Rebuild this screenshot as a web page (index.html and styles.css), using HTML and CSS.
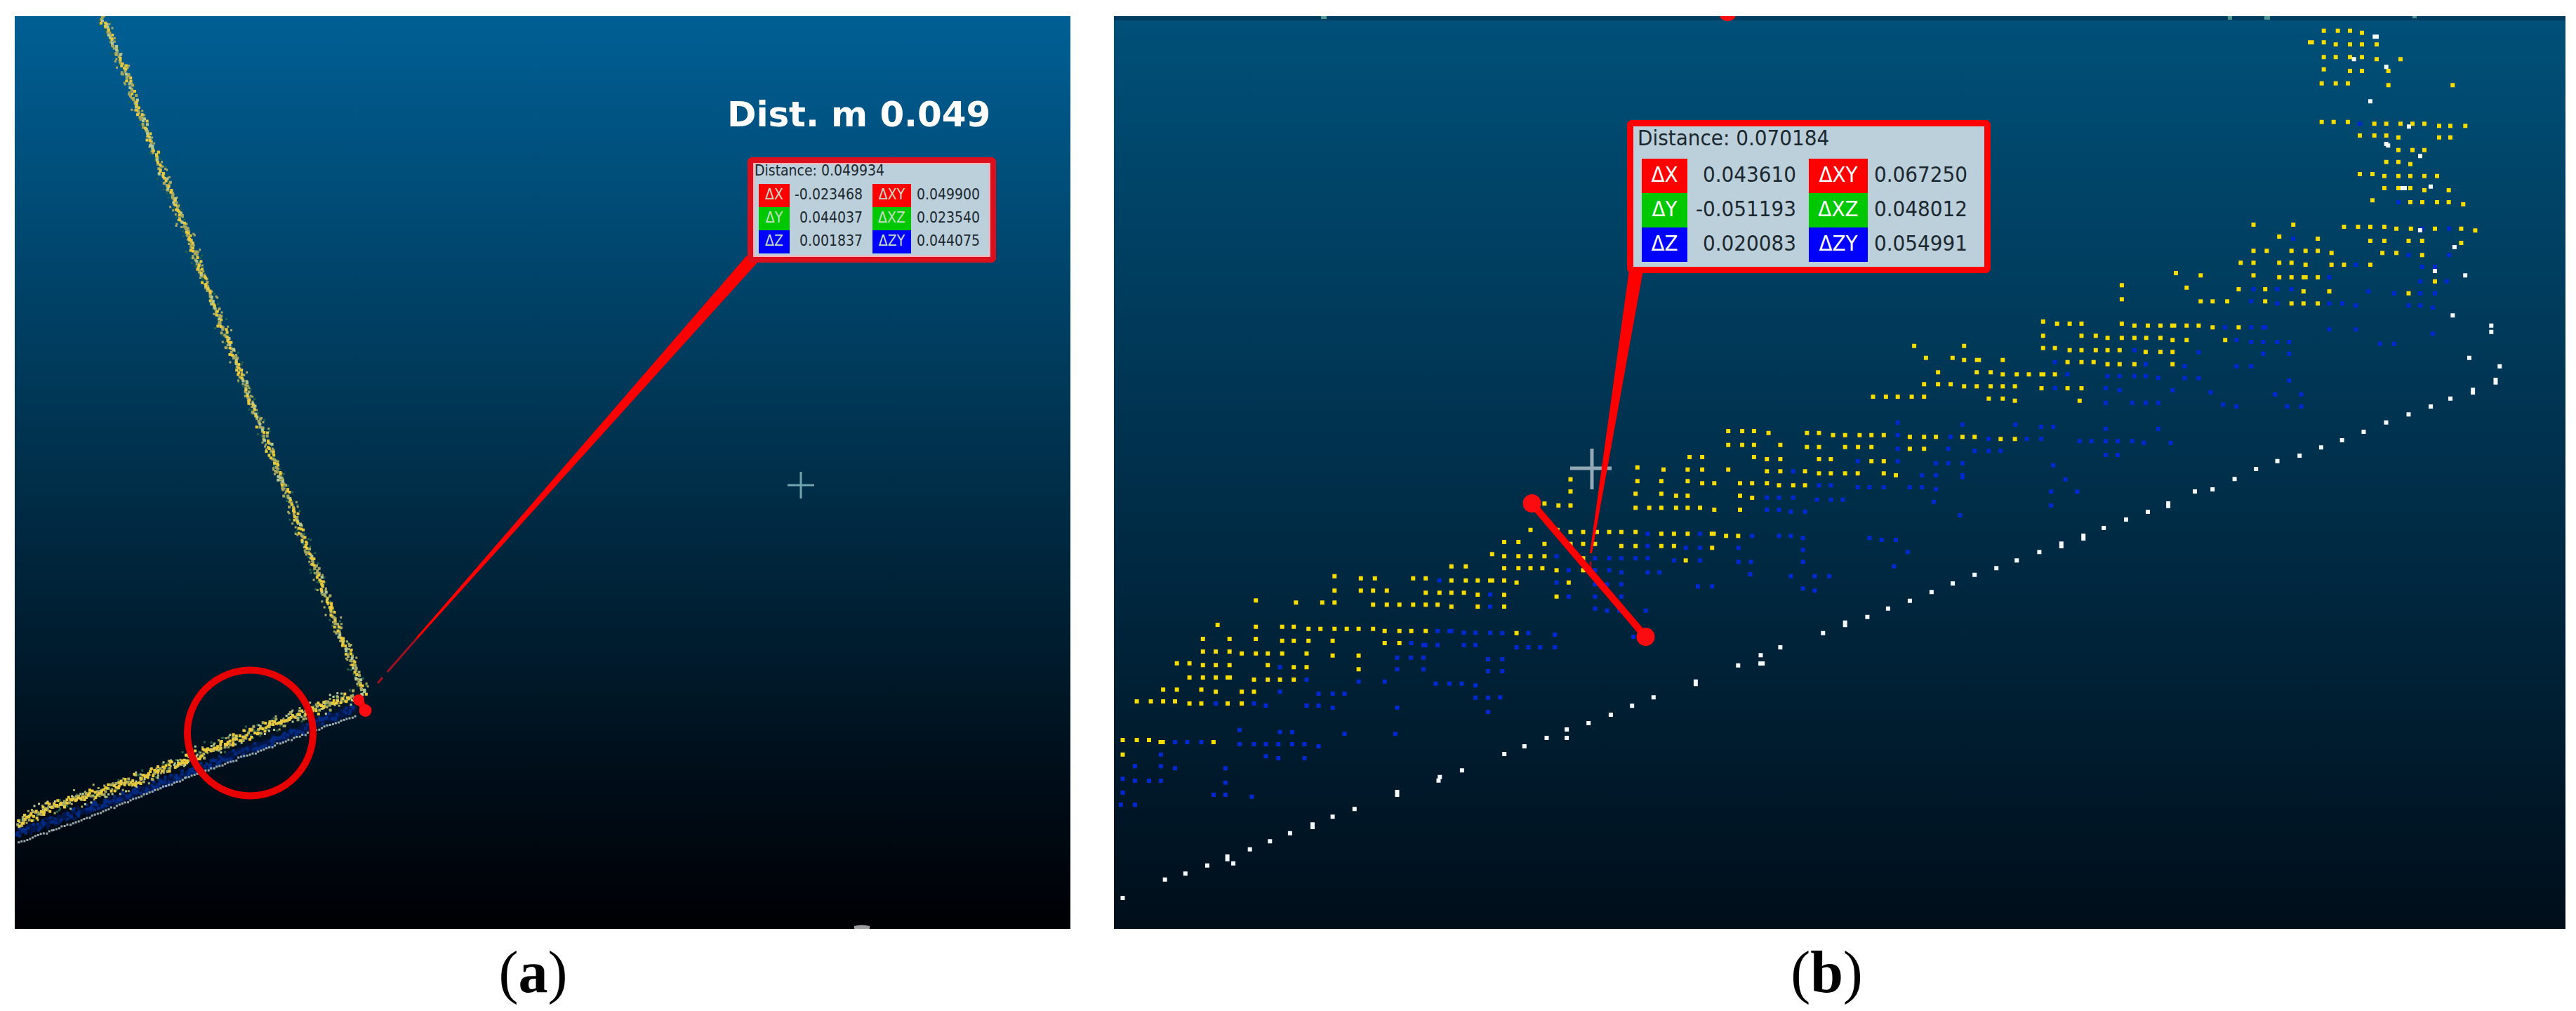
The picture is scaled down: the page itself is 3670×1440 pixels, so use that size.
FILE: index.html
```html
<!DOCTYPE html>
<html lang="en">
<head>
    <meta charset="UTF-8">
    <title>Point cloud distances</title>
    <link rel="stylesheet" href="styles.css">
</head>
<body>
    <div class="figures">
        <figure class="figure figure-a">
            <div class="view view-a">
                <svg class="scene" viewBox="21 23 1504 1300">
                    <g id="cloudA"></g>
                    <circle class="marker" cx="356.5" cy="1044" r="89.5"/>
                    <path class="dist-line" d="M511 996L520.5 1012"/>
                    <circle class="dist-end" cx="511" cy="997" r="8"/>
                    <circle class="dist-end" cx="520.5" cy="1012" r="9"/>
                    <path class="pointer" d="M1064 364L1079 374L594 911L592 909Z"/>
                    <path class="pointer-tip" d="M594 909L552 957M545 965L538 973"/>
                    <path class="cross cross-a" d="M1141 672V710M1122 691H1160"/>
                    <path class="scale-end" d="M1217 1323V1319Q1228 1316 1239 1319V1323Z"/>
                </svg>
                <div class="dist-title">Dist. m 0.049</div>
                <div class="callout callout-a">
                    <div class="callout-title">Distance: 0.049934</div>
                    <div class="callout-grid">
                        <span class="chip red">ΔX</span><span class="num">-0.023468</span><span class="chip red">ΔXY</span><span class="val">0.049900</span>
                        <span class="chip green">ΔY</span><span class="num">0.044037</span><span class="chip green">ΔXZ</span><span class="val">0.023540</span>
                        <span class="chip blue">ΔZ</span><span class="num">0.001837</span><span class="chip blue">ΔZY</span><span class="val">0.044075</span>
                    </div>
                </div>
            </div>
            <figcaption>(<b>a</b>)</figcaption>
        </figure>
        <figure class="figure figure-b">
            <div class="view view-b">
                <svg class="scene" viewBox="1587 23 2068 1300">
                    <rect class="strip" x="1587" y="23" width="2068" height="6"/>
                    <path class="strip-dots" d="M1882 23h8v4h-8zM3174 23h6v5h-6zM3226 23h8v5h-8zM3437 23h6v3h-6z"/>
                    <path class="dist-end" d="M2450 23H2473Q2470 30 2461 30Q2453 30 2450 23Z"/>
                    <g id="cloudB"></g>
                    <path class="cross cross-b" d="M2268 639V697M2237 667H2296"/>
                    <path class="pointer" d="M2321 385H2341L2268 788L2265 788Z"/>
                    <path class="pointer-tip" d="M2266 800V812"/>
                    <path class="dist-line" d="M2182.5 717L2344.5 907"/>
                    <circle class="dist-end" cx="2182.5" cy="717" r="13"/>
                    <circle class="dist-end" cx="2344.5" cy="907" r="13"/>
                </svg>
                <div class="callout callout-b">
                    <div class="callout-title">Distance: 0.070184</div>
                    <div class="callout-grid">
                        <span class="chip red">ΔX</span><span class="num">0.043610</span><span class="chip red">ΔXY</span><span class="val">0.067250</span>
                        <span class="chip green">ΔY</span><span class="num">-0.051193</span><span class="chip green">ΔXZ</span><span class="val">0.048012</span>
                        <span class="chip blue">ΔZ</span><span class="num">0.020083</span><span class="chip blue">ΔZY</span><span class="val">0.054991</span>
                    </div>
                </div>
            </div>
            <figcaption>(<b>b</b>)</figcaption>
        </figure>
    </div>
    <script src="cloud.js"></script>
</body>
</html>
```
FILE: styles.css
```css
body {
    margin: 0;
    background: #fff;
    font-family: "DejaVu Sans Condensed", "DejaVu Sans", sans-serif;
}

.figures {
    display: grid;
    grid-template-columns: 1504px 2068px;
    column-gap: 62px;
    height: 1440px;
    padding: 23px 15px 0 21px;
    box-sizing: border-box;
    overflow: hidden;
}

.figure {
    margin: 0;
}

.view {
    position: relative;
    height: 1300px;
    overflow: hidden;
}

.view-a {
    background: linear-gradient(#005f94, #002f4a 50%, #000d18 84%, #000004);
}

.view-b {
    background: linear-gradient(#005079, #002e49 52%, #000e1a);
}

.scene {
    display: block;
    width: 100%;
    height: 100%;
}

figcaption {
    font: 84px/96px "Liberation Serif", serif;
    padding-top: 14px;
    padding-right: 27px;
    text-align: center;
    color: #000;
}

.figure-b figcaption {
    padding-right: 37px;
}

/* measurement graphics */
.marker {
    fill: none;
    stroke: #e60000;
    stroke-width: 10;
}

.dist-line {
    stroke: #f00;
    stroke-width: 10;
}

.dist-end {
    fill: #fa0c10;
}

.pointer {
    fill: #f00;
}

.pointer-tip {
    stroke: #a01020;
    stroke-width: 3;
}

.cross {
    fill: none;
}

.cross-a {
    stroke: #6fa5ad;
    stroke-width: 3;
}

.cross-b {
    stroke: #93a9b5;
    stroke-width: 5;
}

.scale-end {
    fill: #a0a0a4;
}

.strip {
    fill: #003c60;
}

.strip-dots {
    fill: #4f9a90;
}

/* points */
.p-yellow { fill: #f7dc00; }
.p-blue { fill: #0029d2; }
.p-white { fill: #f4fbff; }
.p-gold { fill: #e8c83c; }
.p-tan { fill: #a8a860; }
.p-pale { fill: #b4c896; }
.p-green { fill: #236048; }
.p-navy { fill: #002a80; }
.p-deep { fill: #00184e; }
.p-gray { fill: #98aaac; }

.dist-title {
    position: absolute;
    left: 1015px;
    top: 110px;
    font: bold 50px/60px "DejaVu Sans", sans-serif;
    letter-spacing: -0.1px;
    color: #fff;
    white-space: nowrap;
}

/* distance labels */
.callout {
    position: absolute;
    box-sizing: border-box;
    background: #bbd0da;
    color: #1c2830;
    white-space: nowrap;
}

.callout-a {
    left: 1044px;
    top: 201px;
    width: 354px;
    height: 150px;
    border: 8px solid #dc0f1c;
    border-radius: 6px;
    box-shadow: inset 0 0 0 2px #ffb0b8;
    font-size: 21px;
}

.callout-b {
    left: 731px;
    top: 148px;
    width: 518px;
    height: 218px;
    border: 9px solid #f00;
    border-radius: 7px;
    font-size: 31px;
}

.callout-title {
    line-height: 22px;
    padding-left: 2px;
    margin-bottom: 8px;
}

.callout-b .callout-title {
    line-height: 33px;
    padding-left: 6px;
    margin-bottom: 13px;
}

.callout-grid {
    display: grid;
    grid-template-columns: 44px 118px 55px auto;
    grid-auto-rows: 33px;
    line-height: 31px;
    padding-left: 8px;
}

.callout-b .callout-grid {
    grid-template-columns: 65px 173px 84px auto;
    grid-auto-rows: 49px;
    line-height: 45px;
    padding-left: 12px;
}

.chip {
    color: #fff;
    text-align: center;
}

.callout-a .chip {
    color: #c8dcc8;
}

.red { background: #f00; }
.green { background: #00c800; }
.blue { background: #00f; }

.num {
    text-align: right;
    padding-right: 14px;
}

.val {
    padding-left: 8px;
}

.callout-b .num {
    padding-right: 18px;
}

.callout-b .val {
    padding-left: 9px;
}
```
FILE: cloud.js
```javascript
// each tile: origin, scale, and rows of "y: x x x" for every colour
const tiles = [
    {
        ox: 1570, oy: 700, sx: 2.24, sy: 3,
        yellow: '268:1245;320:1115 1161;362:742;371:826 871 993 1033;380:1115 1161 1199 1239 1245;424:742 826 865 909;433:1033 1077 1115 1155;441:1199;466:491;475:619 703 742;484:865 909 949 993 1033 1071;492:1115 1199;570:369;578:491 575 612;587:659 697 742 781 819 865;596:902 949 987 1033;630:322 407 491;638:575 612 659 736;648:902 949;684:322 363 407;692:446 491 529 575 653;701:736 819;734:239 279;742:322 363 407 529;751:612 653;760:819;795:279 322 363 401 408;804:485 529 568 612;847:195 239 317;856:363 446 485;897:111 156 195 233;906:279 317 401 446;1062:66 111 150;1071:187 194 356;1124:66',
        blue: '380:1077;440:1239;492:1239;596:1071 1109 1115;604:1155 1192 1239;648:987;656:1026 1032 1071 1155 1192;710:942 986 1026;717:1232;751:568;760:942 1026;768:1232;804:653;812:819 902;821:1065 1109 1148;829:1192;856:568;864:691 736 774;881:1192 1232;906:363 485;915:523 653 691;924:736 942;942:1232;1019:439;1028:568 607;1036:774 936;1071:233 272 317;1080:439 485 523 563 607 646;1089:691;1124:188;1132:523;1140:563 646;1174:105 188;1183:233 394;1228:66;1236:105 150 188;1244:394;1287:66;1296:356 394;1304:478;1339:60 105',
        white: '1017:1483;1053:1419 1483;1089:1348;1122:1284;1192:1149;1220:1078;1235:1074;1284:942;1296:942;1357:806;1390:736;1423:672;1434:672;1460:600;1495:536;1529:472;1560:400;1571:400;1589:419;1598:336;1633:266;1658:201;1737:66'
    },
    {
        ox: 2130, oy: 580, sx: 2.613, sy: 3,
        yellow: '102:868 920 964;110:1018 1161 1206;161:868 920 964 1062;170:1161 1206;213:724 771 964;222:1012 1062 1206;257:530;266:627 717 771 868;274:1012 1062 1154;283:1206;308:281;316:530 619 717;325:771 816 912 957 1012;334:1057 1110 1154;360:281;370:523 619;378:674 717 912;387:957;412:184;420:236 281;430:523 574 619 674 717 763;438:816 912;524:132 232;533:281 328 379 425 470 523;541:619 666 717 807 814;550:860 905;576:34 87;584:184 281 328 372;593:470 523 619 666;601:808;637:34 87 132 184;646:328;655:710;688:34 87 132 176;697:229 328;740:34;749:80 274;802:34;809:229;852:34;965:80',
        blue: '274:1110;334:1206;386:1012 1057 1110;395:1198;438:1012 1057;446:1101 1154;541:568 763;550:957 1057 1101;559:1146;593:568;601:710 763 906;610:1146;637:229;646:372 425 470 523 568;655:666 763;661:906 952 1146;697:274 372 425;706:470 568 612;714:950;722:1101 1190 1244;749:229;757:372 417 470;766:755 808;775:1146;784:1190;809:274 372 470;860:372;869:417 463 561;965:27 124;972:223;981:515;1026:80 124 168 223;1077:27;1128:27;1240:19',
        white: '790:1625;753:1704;827:1544;860:1463;896:1386;920:1303;931:1303;965:1221;1026:1062;1060:989;1095:988 996;1103:905;1172:747;1183:747;1240:590;1276:510;1314:431;1350:348'
    },
    {
        ox: 2600, oy: 400, sx: 2.613, sy: 3,
        yellow: '19:1105;79:1105;174:812;183:864 911 955 1105;191:1152 1202 1249 1293 1300;235:812 955 1008;244:1052 1105 1152 1196 1249;253:1294;278:332 518;287:812 856;296:911 955 1008 1052 1097;304:1194 1249 1294;329:376 475;338:518 566 573 662;347:903 955 1000;356:1052 1097 1152 1294;391:421 565 617;400:662 714 759 806 813 856;442:369 421 468;451:518 565 617 662 707;459:806 903 955;495:179 227 271 323 369;503:610 662;512:707 948;659:30 75 129 173 219;667:316 369 413 512 557;676:654 707;710:75 123 173;718:316 369;762:22;771:173 219;823:22 75 122 219;831:264',
        blue: '296:1152;347:856;356:1194;400:903;407:1052 1097 1152 1194;415:1241;459:856 1045;467:1097 1294;521:1045 1144 1194 1241;606:271;614:512 709;624:805 850;632:1045 1241;659:271;667:468;676:609 751 805;685:948 992 1045 1090 1144;692:1187 1287;718:271 459;727:557 609 654;744:1045 1090;771:122 271;779:413 459 512;788:850;831:361 413 512;839:512;848:895;874:22;882:122 166 219 316 361;890:413;901:842 939;935:22 67;944:405;960:842;1002:503;1099:166;1107:211 264;1159:308;1220:257',
        white: '681:1925;712:1847;747:1767;770:1684;804:1605;847:1525;891:1443;900:1377;951:1278;962:1278;987:1202;1020:1121;1056:1038;1089:962;1101:962;1123:880;1134:880;1159:798;1195:714;1228:638;1256:557'
    },
    {
        ox: 3100, oy: 200, sx: 2.751, sy: 3,
        yellow: '360:304 460;369:659 714 762 817;377:864 921 1015 1118;385:1173;411:405;420:556;429:762 817 912 965;438:1118;472:304 356 453 508 556;481:610 809 864;490:965;523:254 304 405 453;531:508 610 659 762;567:0;577:97 304;585:405 453 501 508 556;602:1015;629:42;636:246 350;645:500 601;653:912;688:97 144 201 350;697:453 500 556;791:42 89;799:144 246;853:42 193',
        blue: '377:965 1071;420:460;490:912 1071;531:705;540:965 1015;585:601;602:958 1062;636:304 397 453;645:754;653:855 958 1015;688:295;697:397 601 652;706:705 912 958;715:1007;799:192 295 343 350;808:601 705;826:1007;853:237;861:295 342 397 444;869:800 855;905:89;911:342 444;965:34 237 295;1016:34 89;1026:444;1076:136;1085:389 491;1129:185;1137:237 436 491',
        white: '384:957;456:1092;558:1015;577:1134;748:1085;791:1236;818:1236;929:1150;965:1269;1023:1253;1034:1253;1066:1164;1077:1164;1103:1076;1137:999;1171:912;1205:824;1245:736'
    },
    {
        ox: 3150, oy: 0, sx: 3, sy: 3,
        yellow: '131:482 542 594;140:645;181:423 431 482;190:533 594 645 708;244:482 533 594 645;253:708 810;296:482;303:594 645 758;356:473 533 585;364:758 1033;521:473 524 585;529:698 749 810 861 912;538:975 1023 1087;579:636 698 749;587:801 975 1023;641:801 861 912;692:749 801;701:852;744:636 690;752:741 801 852 912 966;804:741 801 852;813:912 1016;856:690;864:852 903 966 1016;873:1078',
        blue: '529:636;864:801',
        white: '157:700 708;253:611;286:749;433:681;541:846;615:749;622:757;667:894;797:939;804:819 828'
    }
];

function addPath(group, cls, d) {
    const path = document.createElementNS('http://www.w3.org/2000/svg', 'path');
    path.setAttribute('class', cls);
    path.setAttribute('d', d);
    group.appendChild(path);
}

const cloudB = document.getElementById('cloudB');
for (const color of ['blue', 'yellow', 'white']) {
    let d = '';
    for (const t of tiles) {
        for (const row of t[color].split(';')) {
            const [y, xs] = row.split(':');
            for (const x of xs.split(' ')) {
                const px = t.ox + x / t.sx - 3;
                const py = t.oy + y / t.sy - 3;
                d += `M${px.toFixed(1)} ${py.toFixed(1)}h6v6h-6z`;
            }
        }
    }
    addPath(cloudB, 'p-' + color, d);
}

// fixed seed, so the scattered points stay the same on every load
let seed = 7;
function rnd() {
    seed = (seed * 16807) % 2147483647;
    return seed / 2147483647;
}

const cloudA = document.getElementById('cloudA');

function scatter(line, step, spread, size, classes) {
    const out = {};
    for (let i = 0; i < line.length - 1; i++) {
        const [x1, y1] = line[i];
        const [x2, y2] = line[i + 1];
        const len = Math.hypot(x2 - x1, y2 - y1);
        for (let s = 0; s < len; s += step) {
            const off = (rnd() + rnd() - 1) * spread;
            const x = x1 + (x2 - x1) * s / len - (y2 - y1) / len * off;
            const y = y1 + (y2 - y1) * s / len + (x2 - x1) / len * off;
            const c = classes[Math.floor(rnd() * classes.length)];
            if (x < 21) continue;
            out[c] = (out[c] || '') + `M${x.toFixed(1)} ${y.toFixed(1)}h${size}v${size}h-${size}z`;
        }
    }
    for (const c of classes) {
        if (out[c]) addPath(cloudA, c, out[c]);
        delete out[c];
    }
}

const wall = [[144, 23], [157, 55], [180, 108], [206, 184], [250, 294], [485, 906], [519, 989]];
const slope = [[19, 1171], [70, 1148], [205, 1105], [356, 1042], [425, 1016], [504, 988]];
const band = [[19, 1186], [207, 1122], [358, 1064], [503, 1008]];
const base = [[21, 1199], [75, 1181], [126, 1162], [264, 1107], [507, 1017]];

scatter(band, 0.7, 8, 4, ['p-deep', 'p-navy', 'p-deep']);
scatter(wall, 2.2, 11, 3, ['p-green', 'p-tan']);
scatter(wall, 2.2, 6, 4, ['p-tan', 'p-pale', 'p-gold', 'p-tan', 'p-gold']);
scatter(slope, 1.8, 15, 3, ['p-green', 'p-tan', 'p-pale']);
scatter(slope, 1.6, 9, 4, ['p-tan', 'p-gold', 'p-gold']);
scatter(base, 4.2, 2, 3, ['p-gray']);
```
